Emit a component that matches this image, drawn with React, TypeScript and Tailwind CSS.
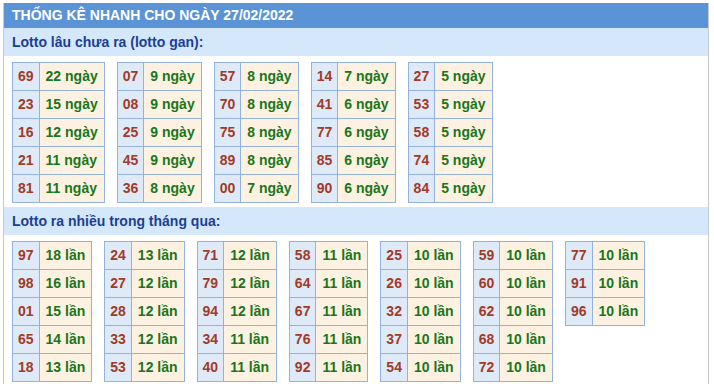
import React from 'react';

type Row = [string, number];

const ganTables: Row[][] = [
  [['69', 22], ['23', 15], ['16', 12], ['21', 11], ['81', 11]],
  [['07', 9], ['08', 9], ['25', 9], ['45', 9], ['36', 8]],
  [['57', 8], ['70', 8], ['75', 8], ['89', 8], ['00', 7]],
  [['14', 7], ['41', 6], ['77', 6], ['85', 6], ['90', 6]],
  [['27', 5], ['53', 5], ['58', 5], ['74', 5], ['84', 5]],
];

const hotTables: Row[][] = [
  [['97', 18], ['98', 16], ['01', 15], ['65', 14], ['18', 13]],
  [['24', 13], ['27', 12], ['28', 12], ['33', 12], ['53', 12]],
  [['71', 12], ['79', 12], ['94', 12], ['34', 11], ['40', 11]],
  [['58', 11], ['64', 11], ['67', 11], ['76', 11], ['92', 11]],
  [['25', 10], ['26', 10], ['32', 10], ['37', 10], ['54', 10]],
  [['59', 10], ['60', 10], ['62', 10], ['68', 10], ['72', 10]],
  [['77', 10], ['91', 10], ['96', 10]],
];

const StatTable: React.FC<{ rows: Row[]; unit: string }> = ({ rows, unit }) => (
  <table className="border-collapse self-start">
    <tbody>
      {rows.map(([num, count]) => (
        <tr key={num}>
          <td className="border border-[#93b3dd] bg-[#dfeaf9] px-[5px] h-[28px] leading-[27px] text-[#a13b27]">{num}</td>
          <td className="border border-[#93b3dd] bg-[#fdf2e2] px-[6px] h-[28px] leading-[27px] text-[#1a761a] whitespace-nowrap">
            {count} {unit}
          </td>
        </tr>
      ))}
    </tbody>
  </table>
);

const SectionTitle: React.FC<{ children: React.ReactNode }> = ({ children }) => (
  <div className="h-7 leading-7 bg-[#d5e7fb] pl-2 text-[#1b3f93]">{children}</div>
);

export default function App() {
  return (
    <div className="pt-[3px] pl-[3px] bg-white min-h-[384px]">
      <div className="w-[706px] border-x border-[#c9c9c9] font-['Liberation_Sans',Arial,sans-serif] text-[14px] font-bold">
        <div className="h-[25px] leading-[25px] bg-[#5b93d7] pl-2 text-white">THỐNG KÊ NHANH CHO NGÀY 27/02/2022</div>
        <SectionTitle>Lotto lâu chưa ra (lotto gan):</SectionTitle>
        <div className="flex flex-wrap gap-3 px-2 pt-[6px] pb-[4px]">
          {ganTables.map((t, i) => (
            <StatTable key={i} rows={t} unit="ngày" />
          ))}
        </div>
        <SectionTitle>Lotto ra nhiều trong tháng qua:</SectionTitle>
        <div className="flex flex-wrap gap-3 px-2 pt-[6px] pb-[4px]">
          {hotTables.map((t, i) => (
            <StatTable key={i} rows={t} unit="lần" />
          ))}
        </div>
      </div>
    </div>
  );
}
